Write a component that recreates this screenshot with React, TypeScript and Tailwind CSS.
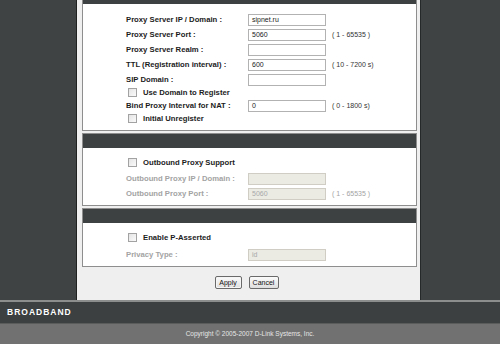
import React from "react";

const labelText = "text-[7.7px] font-bold leading-none";

function TextRow({
  label,
  value = "",
  range,
  disabled = false,
}: {
  label: string;
  value?: string;
  range?: string;
  disabled?: boolean;
}) {
  return (
    <div className="flex h-[15px] items-center">
      <span
        className={`${labelText} w-[122px] shrink-0 ${
          disabled ? "text-[#a3a3a3]" : "text-[#1c1c1c]"
        }`}
      >
        {label}
      </span>
      <div
        className={`flex h-[12px] w-[78px] shrink-0 items-center border px-[3px] text-[7px] leading-none ${
          disabled
            ? "border-[#cfcdc4] bg-[#ebebe4] text-[#a8a8a8]"
            : "border-[#b2b2b2] bg-white text-[#222]"
        }`}
      >
        {value}
      </div>
      {range ? (
        <span
          className={`ml-[6px] text-[7px] leading-none ${
            disabled ? "text-[#a3a3a3]" : "text-[#333]"
          }`}
        >
          {range}
        </span>
      ) : null}
    </div>
  );
}

function CheckRow({ label, className = "" }: { label: string; className?: string }) {
  return (
    <div className={`flex h-[11px] items-center pl-[2px] ${className}`}>
      <span className="h-[9px] w-[9px] shrink-0 border border-[#a2a2a2] bg-[linear-gradient(135deg,#e4e4e4,#fafafa)]" />
      <span className={`${labelText} ml-[6px] text-[#1c1c1c]`}>{label}</span>
    </div>
  );
}

function Panel({
  children,
  className = "",
  bodyClassName = "",
}: {
  children: React.ReactNode;
  className?: string;
  bodyClassName?: string;
}) {
  return (
    <section className={`border border-[#8e8e8e] bg-white ${className}`}>
      <div className="h-[14px] bg-[#3d4141]" />
      <div className={`pl-[43px] ${bodyClassName}`}>{children}</div>
    </section>
  );
}

export default function App() {
  return (
    <div className="flex h-[344px] w-[500px] flex-col overflow-hidden bg-[#3f4343] font-['Liberation_Sans',Arial,sans-serif]">
      <div className="flex h-[300px] shrink-0">
        <aside className="w-[77px] shrink-0 border-r border-[#1f2121] bg-[#3f4343]" />

        <main className="flex w-[343px] shrink-0 flex-col overflow-hidden bg-[#efefef] pl-[5px] pr-[3px]">
          <Panel className="-mt-[11px]" bodyClassName="pt-[8px] pb-[6px]">
            <TextRow label="Proxy Server IP / Domain :" value="sipnet.ru" />
            <TextRow label="Proxy Server Port :" value="5060" range="( 1 - 65535 )" />
            <TextRow label="Proxy Server Realm :" />
            <TextRow label="TTL (Registration interval) :" value="600" range="( 10 - 7200 s)" />
            <TextRow label="SIP Domain :" />
            <CheckRow label="Use Domain to Register" />
            <TextRow label="Bind Proxy Interval for NAT :" value="0" range="( 0 - 1800 s)" />
            <CheckRow label="Initial Unregister" />
          </Panel>

          <Panel className="mt-[2px]" bodyClassName="pt-[9px] pb-[4px]">
            <CheckRow label="Outbound Proxy Support" className="mb-[3px]" />
            <TextRow label="Outbound Proxy IP / Domain :" disabled />
            <TextRow label="Outbound Proxy Port :" value="5060" range="( 1 - 65535 )" disabled />
          </Panel>

          <Panel className="mt-[2px]" bodyClassName="pt-[9px] pb-[4px]">
            <CheckRow label="Enable P-Asserted" className="mb-[4px]" />
            <TextRow label="Privacy Type :" value="id" disabled />
          </Panel>

          <div className="mt-[9px] flex justify-center gap-[7px] pr-[6px]">
            <button
              type="button"
              className="h-[13px] w-[27px] rounded-[2px] border border-[#6a6a6a] bg-[linear-gradient(180deg,#fbfbfb,#dedede)] text-[7px] leading-none text-[#111] shadow-[inset_0_0_0_1px_#f5f5f5]"
            >
              Apply
            </button>
            <button
              type="button"
              className="h-[13px] w-[30px] rounded-[2px] border border-[#6a6a6a] bg-[linear-gradient(180deg,#fbfbfb,#dedede)] text-[7px] leading-none text-[#111]"
            >
              Cancel
            </button>
          </div>
        </main>

        <aside className="flex-1 border-l border-[#262929] bg-[#3f4343]" />
      </div>

      <footer className="flex flex-col">
        <div className="h-[2px] bg-[#8c8e8e]" />
        <div className="flex h-[21px] items-center bg-[#3c4040] pl-[7px]">
          <span className="text-[8.5px] font-bold uppercase leading-none tracking-[1px] text-white">
            Broadband
          </span>
        </div>
        <div className="flex h-[21px] items-center justify-center border-t border-[#5a5c5c] bg-[#717171]">
          <span className="text-[6.5px] leading-none text-[#e6e6e6]">
            Copyright © 2005-2007 D-Link Systems, Inc.
          </span>
        </div>
      </footer>
    </div>
  );
}
